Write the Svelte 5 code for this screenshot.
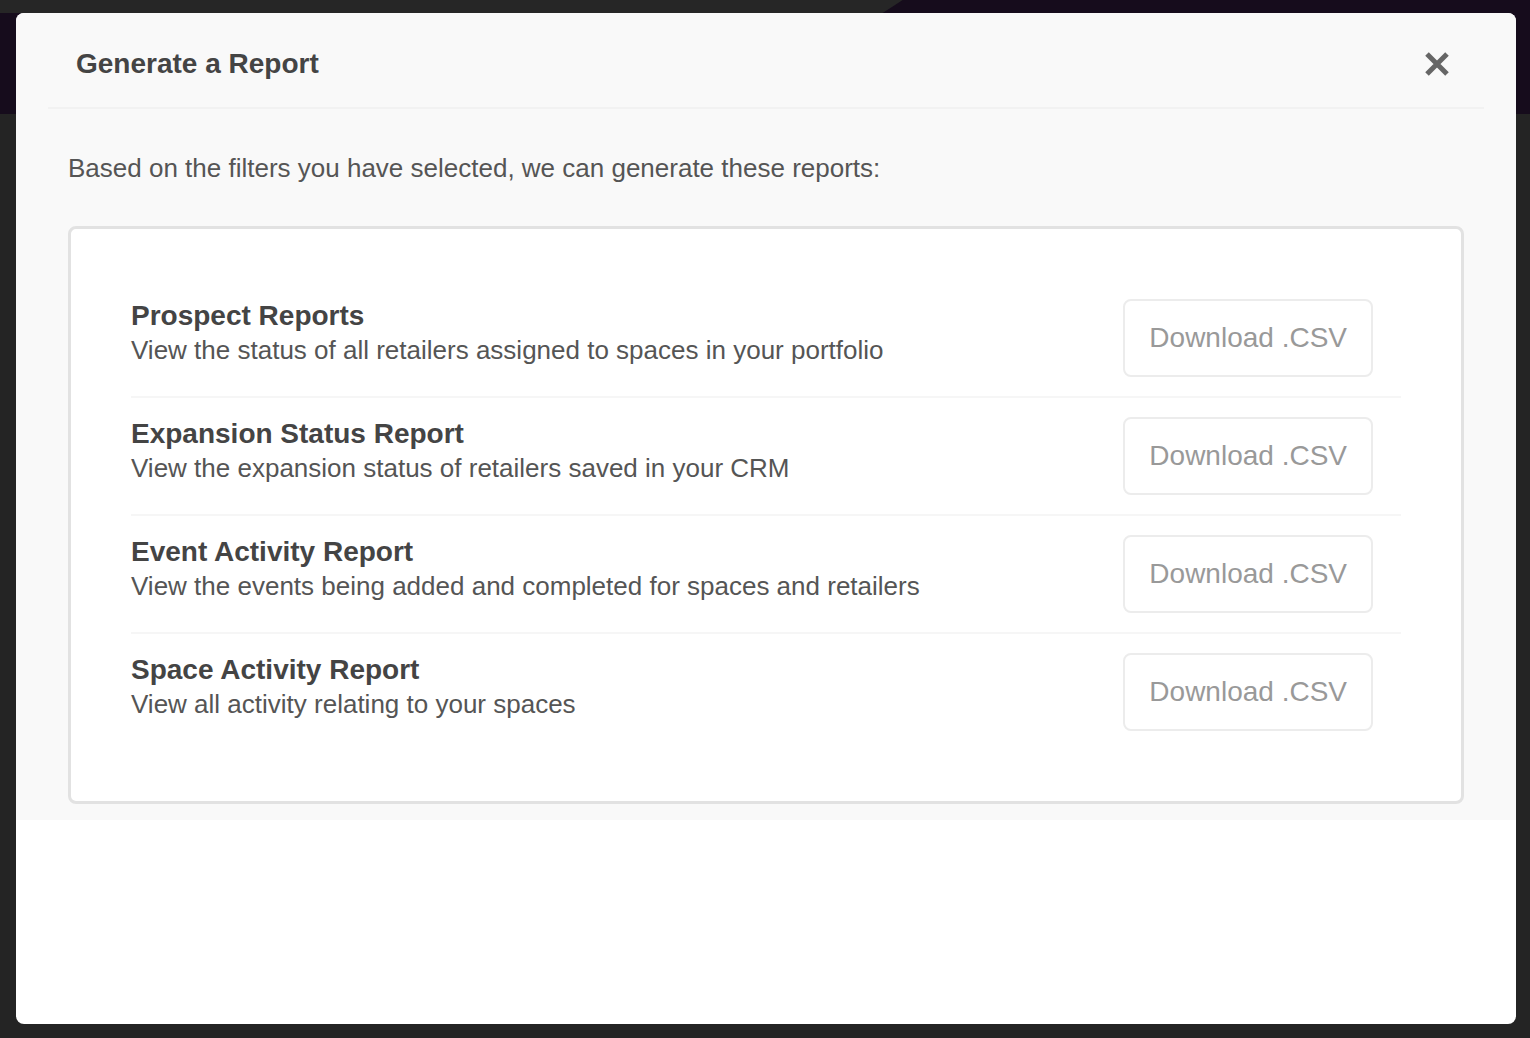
<script lang="ts">
  type Report = { id: string; title: string; description: string };

  const reports: Report[] = [
    {
      id: "prospect",
      title: "Prospect Reports",
      description: "View the status of all retailers assigned to spaces in your portfolio",
    },
    {
      id: "expansion",
      title: "Expansion Status Report",
      description: "View the expansion status of retailers saved in your CRM",
    },
    {
      id: "events",
      title: "Event Activity Report",
      description: "View the events being added and completed for spaces and retailers",
    },
    {
      id: "spaces",
      title: "Space Activity Report",
      description: "View all activity relating to your spaces",
    },
  ];
</script>

<div class="backdrop">
  <div class="app-bar" aria-hidden="true"><div class="tab"></div></div>

  <div class="modal" role="dialog" aria-modal="true" aria-labelledby="modal-title">
    <div class="content">
      <header>
        <h1 id="modal-title">Generate a Report</h1>
        <button class="close" aria-label="Close">
          <svg viewBox="0 0 28 28" width="28" height="28" aria-hidden="true">
            <path d="M4 4L24 24M24 4L4 24" />
          </svg>
        </button>
      </header>

      <p class="intro">Based on the filters you have selected, we can generate these reports:</p>

      <ul class="reports">
        {#each reports as report (report.id)}
          <li>
            <div class="info">
              <h2 id={report.id}>{report.title}</h2>
              <p>{report.description}</p>
            </div>
            <button class="download" aria-describedby={report.id}>Download .CSV</button>
          </li>
        {/each}
      </ul>
    </div>
  </div>
</div>

<style>
  :global(body) {
    margin: 0;
    background: #242424;
  }

  .backdrop {
    position: relative;
    box-sizing: border-box;
    min-height: 100vh;
    padding: 13px 14px 14px 16px;
    display: flex;
    background: #242424;
    font-family: "Liberation Sans", Arial, Helvetica, sans-serif;
    font-size: 26px;
    line-height: 34px;
    color: #555;
  }

  /* page header showing behind the modal */
  .app-bar {
    position: absolute;
    inset: 0 0 auto;
    height: 114px;
    background: #160c1c;
  }
  .tab {
    width: 59%;
    height: 13px;
    background: #262626;
    clip-path: polygon(0 0, 100% 0, calc(100% - 20px) 100%, 0 100%);
  }

  .modal {
    position: relative;
    flex: 1;
    min-width: 0;
    overflow: hidden;
    border-radius: 8px;
    background: #fff;
  }
  .content {
    padding-bottom: 16px;
    background: #f9f9f9;
  }

  header {
    display: flex;
    align-items: center;
    justify-content: space-between;
    margin: 0 32px;
    padding: 34px 30px 26px 28px;
    border-bottom: 2px solid #f2f2f2;
  }
  h1,
  h2,
  p {
    margin: 0;
  }
  h1,
  h2 {
    font-size: 28px;
    font-weight: 700;
    color: #444;
  }

  button {
    font: inherit;
    cursor: pointer;
  }
  button:focus-visible {
    outline: 2px solid #777;
    outline-offset: 2px;
  }

  .close {
    display: flex;
    padding: 3px;
    border: 0;
    background: none;
  }
  .close path {
    fill: none;
    stroke: #666;
    stroke-width: 5;
  }

  .intro {
    padding: 42px 52px 41px;
  }

  .reports {
    margin: 0 52px;
    padding: 51px 60px;
    list-style: none;
    border: 3px solid #e2e2e2;
    border-radius: 8px;
    background: #fff;
  }
  li {
    display: flex;
    align-items: flex-start;
    justify-content: space-between;
    gap: 24px;
    padding: 19px 28px 19px 0;
    border-bottom: 2px solid #f6f6f6;
  }
  li:last-child {
    border-bottom: 0;
  }

  .download {
    flex: none;
    padding: 20px 24px;
    border: 2px solid #ececec;
    border-radius: 8px;
    background: #fff;
    color: #999;
    font-size: 28px;
  }
</style>
